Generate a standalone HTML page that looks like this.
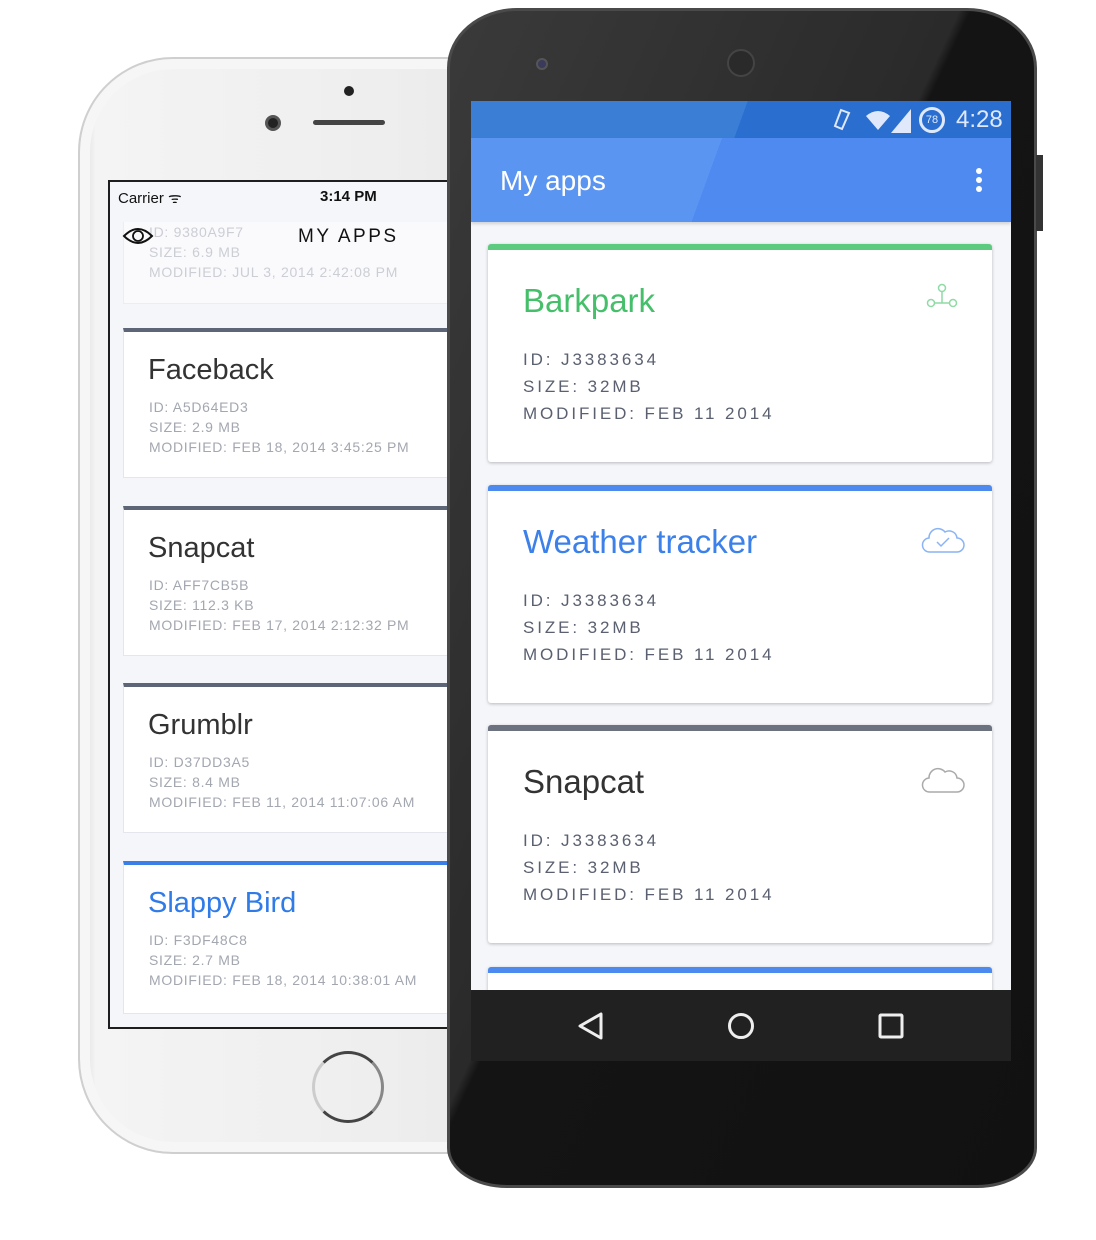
<!DOCTYPE html>
<html><head><meta charset="utf-8"><style>
*{margin:0;padding:0;box-sizing:border-box}
body{width:1096px;height:1240px;background:#fff;position:relative;overflow:hidden;font-family:"Liberation Sans",sans-serif}
.abs{position:absolute}
#ip{left:78px;top:57px;width:520px;height:1097px;border-radius:95px;background:linear-gradient(90deg,#d8d8d8 0,#f4f4f4 3%,#efefef 50%,#e8e8e8 100%);border:2px solid #cfcfcf;box-shadow:inset 0 0 0 10px #f6f6f6}
#ips{left:108px;top:180px;width:360px;height:849px;border:2px solid #1e1e1e;background:#f5f6fa;overflow:hidden}
.ic{position:absolute;left:13px;width:340px;background:#fff;border:1px solid #e4e6ee;border-top:4px solid #5d6576}
.ic h3{font-weight:300;font-size:29px;color:#333;margin:22px 0 0 24px}
.ic p{font-size:14px;color:#a3a7b0;letter-spacing:.7px;margin-left:25px;line-height:20px}
#an{left:447px;top:8px;width:590px;height:1180px;border-radius:70px 70px 60px 60px/60px 60px 40px 40px;background:linear-gradient(115deg,#3a3a3a 0,#2a2a2a 45%,#141414 46%,#111 100%);border:3px solid #4a4a4a}
#as{left:471px;top:101px;width:540px;height:960px;background:#f4f6fa;overflow:hidden}
.ac{position:absolute;left:17px;width:504px;height:218px;background:#fff;border-radius:3px;box-shadow:0 1px 3px rgba(0,0,0,.25);border-top:6px solid}
.ac h2{font-weight:400;font-size:33px;margin:32px 0 0 35px;font-family:"Liberation Sans",sans-serif}
.ac p{font-size:17px;color:#5a6070;letter-spacing:2.9px;margin-left:35px;line-height:27px}
.ac .m{margin-top:26px}
</style></head><body>
<div id="ip" class="abs"></div>
<div class="abs" style="left:265px;top:115px;width:16px;height:16px;border-radius:50%;background:#222;border:3px solid #555"></div>
<div class="abs" style="left:344px;top:86px;width:10px;height:10px;border-radius:50%;background:#222"></div>
<div class="abs" style="left:313px;top:120px;width:72px;height:5px;border-radius:3px;background:#444"></div>
<div class="abs" style="left:312px;top:1051px;width:72px;height:72px;border-radius:50%;border:3px solid #444;border-left-color:#ccc;border-right-color:#888"></div>
<div id="ips" class="abs">
 <div class="abs" style="left:8px;top:6px;font-size:15px;color:#111">Carrier ᯤ</div>
 <div class="abs" style="left:210px;top:6px;font-size:15px;font-weight:bold;color:#111">3:14 PM</div>
 <div class="ic" style="top:40px;height:82px;border-top:none;opacity:.5"><p style="margin-top:0;margin-left:25px">ID: 9380A9F7<br>SIZE: 6.9 MB<br>MODIFIED: JUL 3, 2014 2:42:08 PM</p></div>
 <svg class="abs" style="left:12px;top:44px" width="32" height="20" viewBox="0 0 32 20"><path d="M2 10Q16-4 30 10Q16 24 2 10Z" fill="none" stroke="#111" stroke-width="2"/><circle cx="16" cy="10" r="5" fill="none" stroke="#111" stroke-width="1.8"/></svg>
 <div class="abs" style="left:188px;top:44px;font-size:19px;letter-spacing:2.5px;color:#111">MY APPS</div>
 <div class="ic" style="top:146px;height:150px"><h3>Faceback</h3><p style="margin-top:10px">ID: A5D64ED3<br>SIZE: 2.9 MB<br>MODIFIED: FEB 18, 2014 3:45:25 PM</p></div>
 <div class="ic" style="top:324px;height:150px"><h3>Snapcat</h3><p style="margin-top:10px">ID: AFF7CB5B<br>SIZE: 112.3 KB<br>MODIFIED: FEB 17, 2014 2:12:32 PM</p></div>
 <div class="ic" style="top:501px;height:150px"><h3>Grumblr</h3><p style="margin-top:10px">ID: D37DD3A5<br>SIZE: 8.4 MB<br>MODIFIED: FEB 11, 2014 11:07:06 AM</p></div>
 <div class="ic" style="top:679px;height:153px;border-top-color:#3c7ee8"><h3 style="color:#2f7be8">Slappy Bird</h3><p style="margin-top:10px">ID: F3DF48C8<br>SIZE: 2.7 MB<br>MODIFIED: FEB 18, 2014 10:38:01 AM</p></div>
</div>
<div id="an" class="abs"></div>
<div class="abs" style="left:1036px;top:155px;width:7px;height:76px;background:#333"></div>
<div class="abs" style="left:536px;top:58px;width:12px;height:12px;border-radius:50%;background:#3a3a5a;border:2px solid #555"></div>
<div class="abs" style="left:727px;top:49px;width:28px;height:28px;border-radius:50%;background:#2a2a2a;border:2px solid #444"></div>
<div id="as" class="abs">
 <div class="abs" style="left:0;top:0;width:540px;height:37px;background:linear-gradient(110deg,#3a7ed6 0,#3a7ed6 50%,#2a6fd0 50%)"></div>
 <div class="abs" style="left:485px;top:5px;font-size:24px;color:#dfe9fb">4:28</div>
 <div class="abs" style="left:448px;top:6px;width:26px;height:26px;border-radius:50%;border:3px solid #dfe9fb;color:#dfe9fb;font-size:11px;text-align:center;line-height:20px">78</div>
 <svg class="abs" style="left:360px;top:5px" width="85" height="28"><path d="M10 4l8 3-7 16-7-3z" fill="none" stroke="#dfe9fb" stroke-width="2"/><path d="M35 10q12-10 24 0l-12 14z" fill="#dfe9fb"/><path d="M80 3v24h-20z" fill="#dfe9fb"/></svg>
 <div class="abs" style="left:0;top:37px;width:540px;height:84px;background:linear-gradient(110deg,#5b95f2 0,#5b95f2 44%,#4e8af0 44%);box-shadow:0 2px 3px rgba(0,0,0,.15)"></div>
 <div class="abs" style="left:29px;top:64px;font-size:28px;color:#fff">My apps</div>
 <div class="abs" style="left:505px;top:67px;width:6px;height:6px;border-radius:50%;background:#fff;box-shadow:0 9px 0 #fff,0 18px 0 #fff"></div>
 <div class="ac" style="top:143px;border-color:#5ccb7f"><h2 style="color:#45bf6a">Barkpark</h2><p class="m">ID: J3383634<br>SIZE: 32MB<br>MODIFIED: FEB 11 2014</p>
  <svg class="abs" style="left:438px;top:33px" width="32" height="28"><circle cx="16" cy="5" r="3.5" fill="none" stroke="#8fdaa5" stroke-width="1.5"/><line x1="16" y1="8.5" x2="16" y2="20" stroke="#8fdaa5" stroke-width="1.5"/><circle cx="5" cy="20" r="3.5" fill="none" stroke="#8fdaa5" stroke-width="1.5"/><circle cx="27" cy="20" r="3.5" fill="none" stroke="#8fdaa5" stroke-width="1.5"/><line x1="8.5" y1="20" x2="23.5" y2="20" stroke="#8fdaa5" stroke-width="1.5"/></svg></div>
 <div class="ac" style="top:384px;border-color:#4d8af0"><h2 style="color:#3c80ea">Weather tracker</h2><p class="m">ID: J3383634<br>SIZE: 32MB<br>MODIFIED: FEB 11 2014</p>
  <svg class="abs" style="left:432px;top:33px" width="46" height="32"><path d="M10 28a7 7 0 0 1-1-14a9 9 0 0 1 16-6a8 8 0 0 1 12 6a7 7 0 0 1 0 14z" fill="none" stroke="#8ab4f5" stroke-width="1.5"/><path d="M17 18l4 4 8-8" fill="none" stroke="#8ab4f5" stroke-width="1.5"/></svg></div>
 <div class="ac" style="top:624px;border-color:#6c7280"><h2 style="color:#333">Snapcat</h2><p class="m">ID: J3383634<br>SIZE: 32MB<br>MODIFIED: FEB 11 2014</p>
  <svg class="abs" style="left:432px;top:33px" width="46" height="32"><path d="M10 28a7 7 0 0 1-1-14a9 9 0 0 1 16-6a8 8 0 0 1 12 6a7 7 0 0 1 0 14z" fill="none" stroke="#aaa" stroke-width="1.5"/></svg></div>
 <div class="ac" style="top:866px;border-color:#4d8af0"></div>
 <div class="abs" style="left:0;top:889px;width:540px;height:71px;background:#212121"></div>
 <svg class="abs" style="left:0;top:889px" width="540" height="71"><path d="M130 24v24l-21-12z" fill="none" stroke="#eee" stroke-width="3" stroke-linejoin="round"/><circle cx="270" cy="36" r="11.5" fill="none" stroke="#eee" stroke-width="3"/><rect x="409" y="25" width="22" height="22" rx="1" fill="none" stroke="#eee" stroke-width="3"/></svg>
</div>
</body></html>
